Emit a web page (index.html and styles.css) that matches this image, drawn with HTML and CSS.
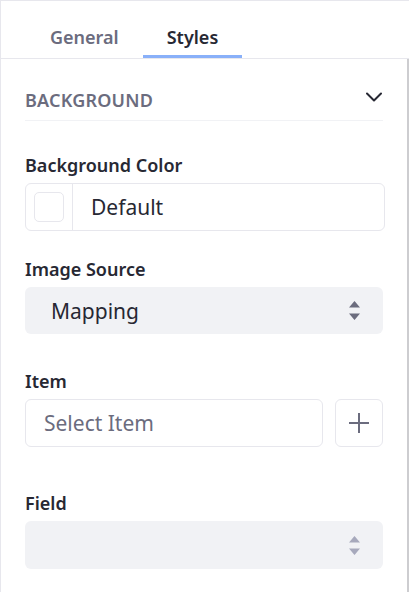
FILE: index.html
```html
<!DOCTYPE html>
<html>
<head>
<meta charset="utf-8">
<link rel="stylesheet" href="styles.css">
</head>
<body>
<div class="panel">
  <nav class="tabs">
    <div class="tab">General</div>
    <div class="tab active">Styles</div>
  </nav>
  <div class="content">
    <div class="section-head">
      <span class="section-title">BACKGROUND</span>
      <svg class="chevron" width="16" height="10" viewBox="0 0 16 10"><path d="M1 1.5 L8 8.5 L15 1.5" fill="none" stroke="#272833" stroke-width="2" stroke-linecap="round" stroke-linejoin="round"/></svg>
    </div>

    <div class="field field-color">
      <label class="label">Background Color</label>
      <div class="color-input">
        <div class="swatch-cell"><span class="swatch"></span></div>
        <span class="color-value">Default</span>
      </div>
    </div>

    <div class="field field-source">
      <label class="label">Image Source</label>
      <div class="select">
        <span class="select-value">Mapping</span>
        <svg class="caret" width="11" height="19" viewBox="0 0 11 19"><path d="M5.5 0 L11 6.5 H0 Z M5.5 19 L11 12.5 H0 Z" fill="currentColor"/></svg>
      </div>
    </div>

    <div class="field field-item">
      <label class="label">Item</label>
      <div class="item-row">
        <div class="text-input">Select Item</div>
        <div class="add-btn">
          <svg width="22" height="22" viewBox="0 0 22 22"><path d="M11 1 V21 M1 11 H21" stroke="#6b6c7e" stroke-width="2" fill="none"/></svg>
        </div>
      </div>
    </div>

    <div class="field field-last">
      <label class="label">Field</label>
      <div class="select disabled">
        <span class="select-value"></span>
        <svg class="caret" width="11" height="19" viewBox="0 0 11 19"><path d="M5.5 0 L11 6.5 H0 Z M5.5 19 L11 12.5 H0 Z" fill="currentColor"/></svg>
      </div>
    </div>
  </div>
</div>
</body>
</html>
```

FILE: styles.css
```css
* { box-sizing: border-box; }
html, body { margin: 0; padding: 0; background: #fff; }
body { font-family: "Noto Sans", "Open Sans", sans-serif; color: #272833; }

.panel {
  width: 409px;
  height: 592px;
  border-top: 1px solid #e7e7ed;
  border-left: 1px solid #e7e7ed;
  display: flex;
  flex-direction: column;
  overflow: hidden;
}

.tabs {
  display: flex;
  padding-left: 25px;
  height: 58px;
  border-bottom: 1px solid #e7e7ed;
  flex-shrink: 0;
}
.tab {
  padding: 24px 24px 0;
  font-size: 18px;
  font-weight: 600;
  line-height: 24px;
  color: #6b6c7e;
}
.tab.active {
  color: #272833;
  box-shadow: inset 0 -3px 0 #89b0f9;
}

.content {
  flex: 1;
  padding: 0 24px;
  border-right: 2px solid #cdcdd0;
}

.section-head {
  display: flex;
  align-items: center;
  justify-content: space-between;
  height: 62px;
  padding-top: 20px;
  border-bottom: 1px solid #f1f2f5;
}
.section-title {
  font-size: 18px;
  font-weight: 600;
  color: #6b6c7e;
  letter-spacing: 0.2px;
}
.chevron { margin-right: 1px; margin-top: -6px; }

.label {
  display: block;
  font-size: 18px;
  font-weight: 600;
  line-height: 24px;
  color: #272833;
  margin-bottom: 6px;
}
.field-color { margin-top: 32px; }
.field-source { margin-top: 26px; }
.field-item { margin-top: 35px; }
.field-last { margin-top: 44px; }

.color-input {
  display: flex;
  height: 48px;
  border: 1px solid #e7e7ed;
  border-radius: 6px;
  width: 360px;
}
.swatch-cell {
  width: 47px;
  border-right: 1px solid #e7e7ed;
  display: flex;
  align-items: center;
  justify-content: center;
}
.swatch {
  width: 30px;
  height: 30px;
  border: 1px solid #e7e7ed;
  border-radius: 5px;
}
.color-value {
  font-size: 21px;
  line-height: 46px;
  padding-left: 18px;
  color: #272833;
}

.select {
  display: flex;
  align-items: center;
  justify-content: space-between;
  height: 47px;
  background: #f1f2f5;
  border-radius: 6px;
  padding: 0 23px 0 26px;
  color: #6b6c7e;
}
.select-value {
  font-size: 21px;
  color: #272833;
}
.select.disabled { height: 48px; color: #a7a9bc; }

.item-row { display: flex; gap: 12px; }
.text-input {
  flex: 1;
  height: 48px;
  border: 1px solid #e7e7ed;
  border-radius: 6px;
  font-size: 21px;
  line-height: 46px;
  padding-left: 18px;
  color: #6b6c7e;
}
.add-btn {
  width: 48px;
  height: 48px;
  border: 1px solid #e7e7ed;
  border-radius: 6px;
  display: flex;
  align-items: center;
  justify-content: center;
}
```
